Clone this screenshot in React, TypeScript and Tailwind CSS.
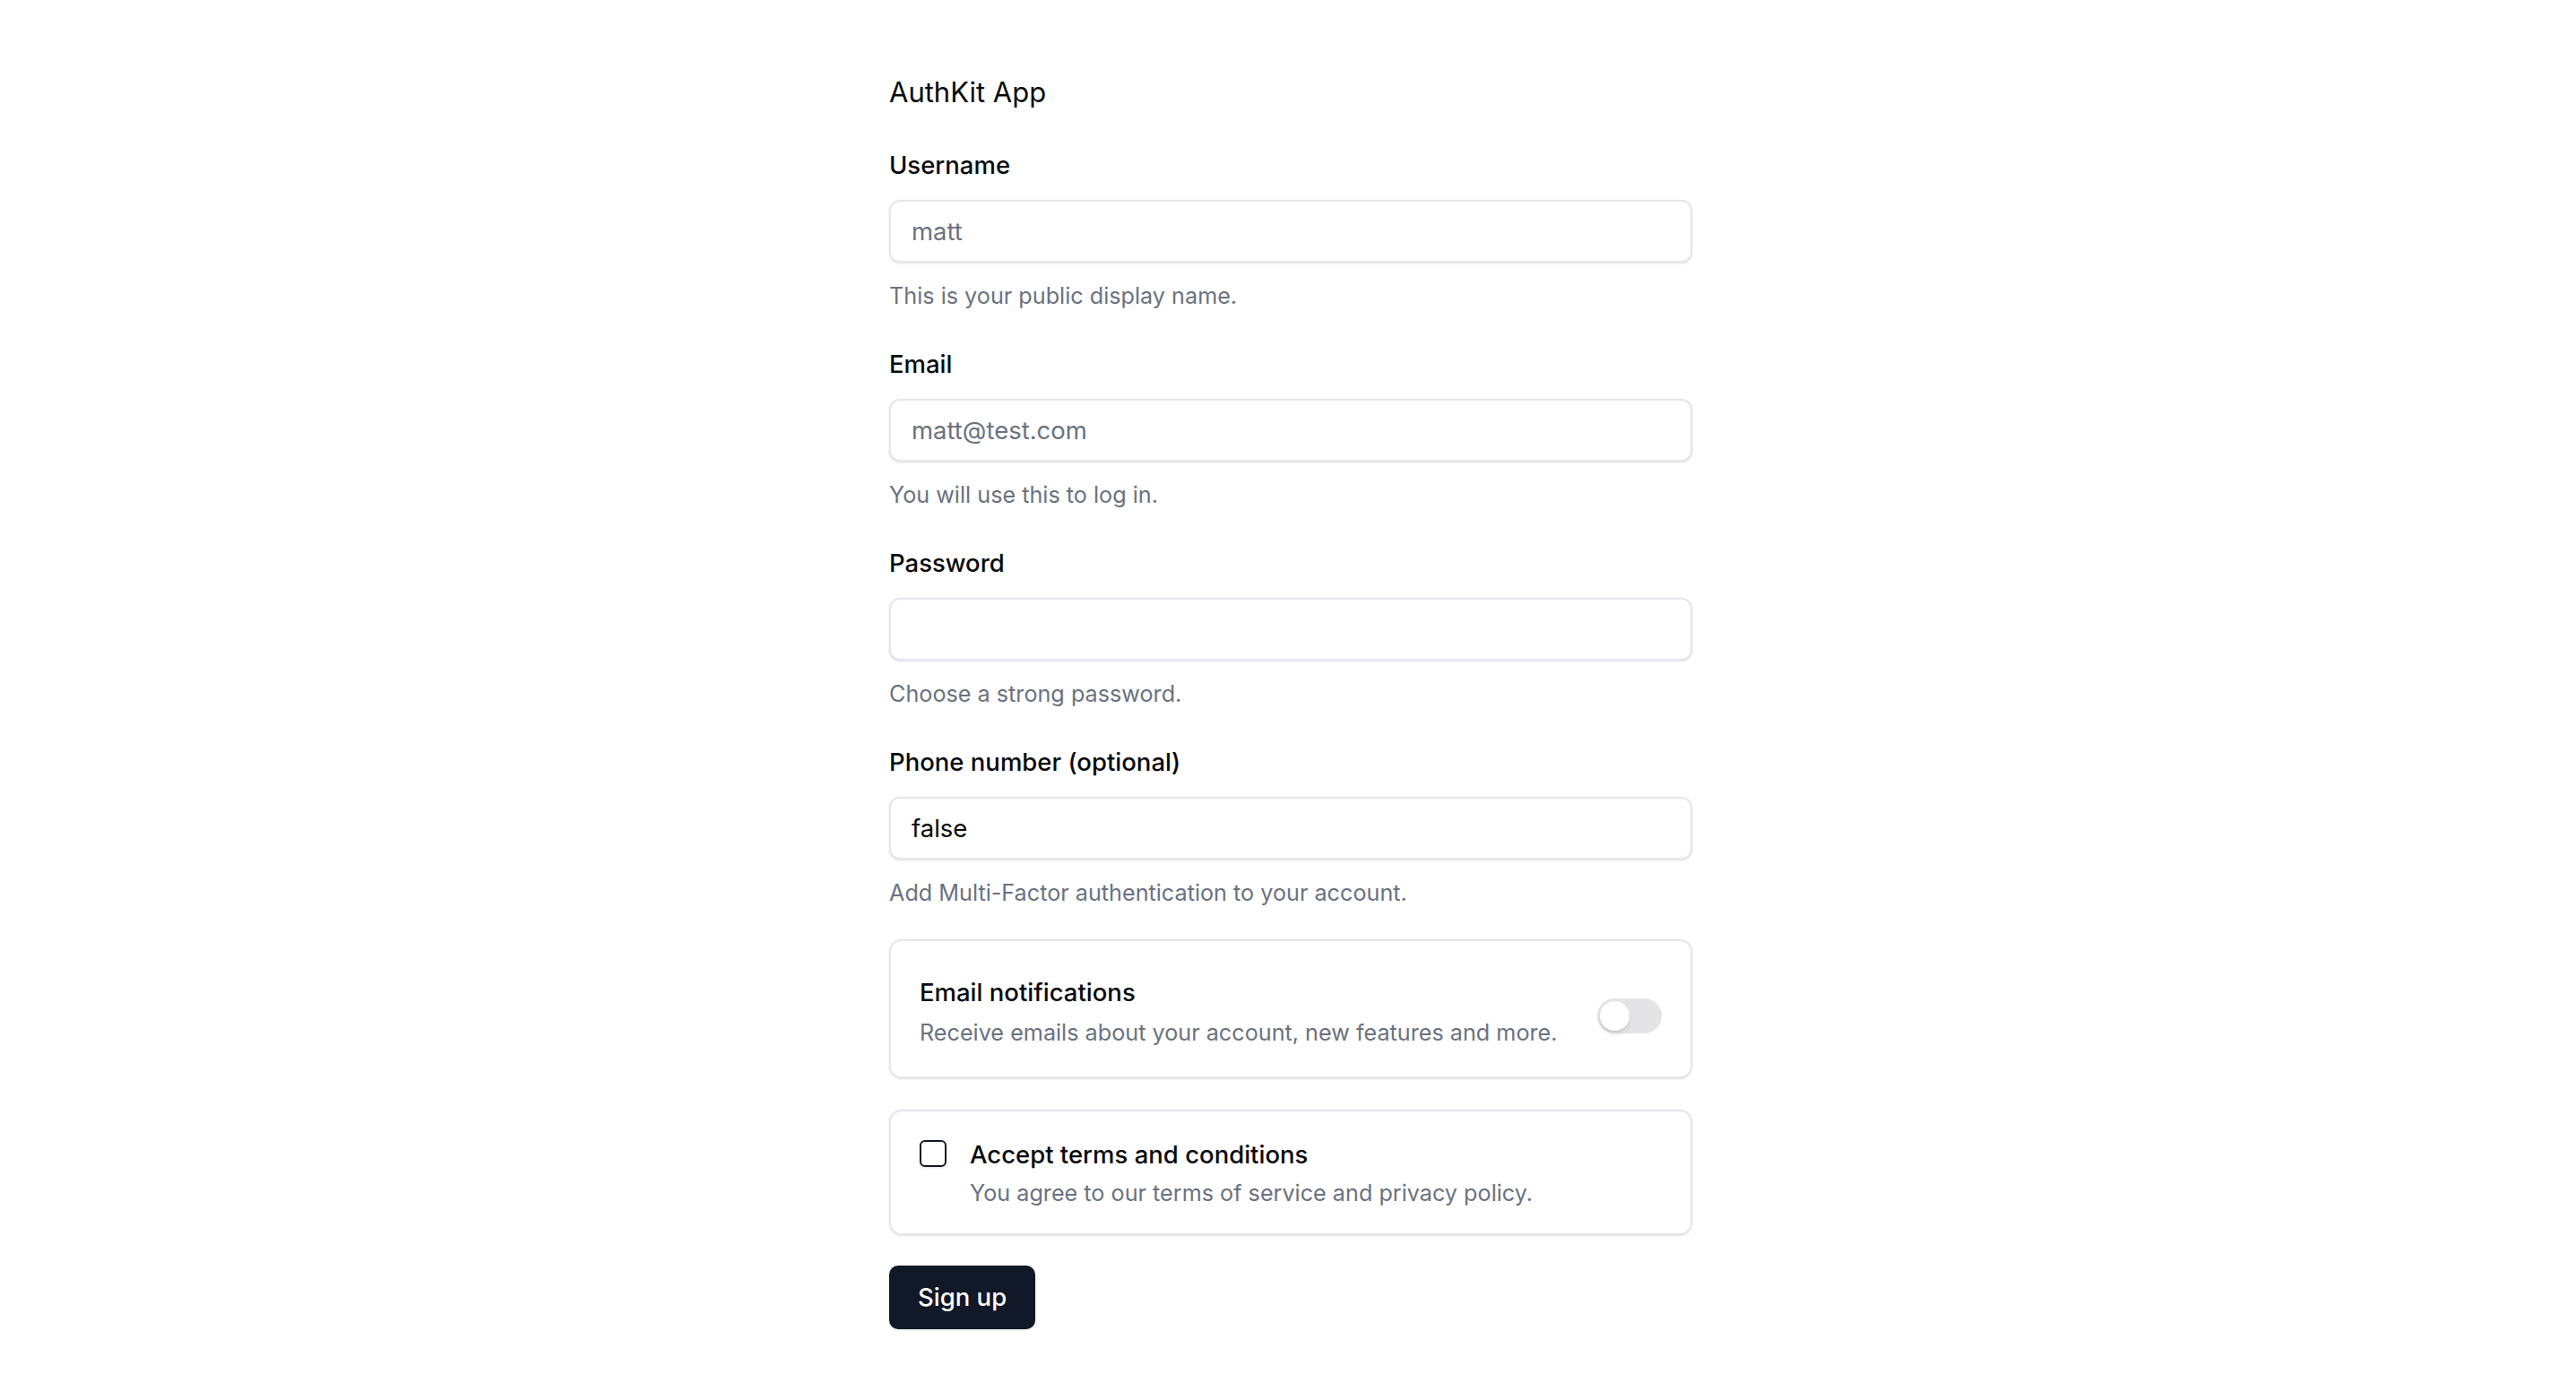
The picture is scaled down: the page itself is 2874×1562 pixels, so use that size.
import { useState } from "react";

type FieldProps = {
  label: string;
  description: string;
  type?: string;
  placeholder?: string;
  defaultValue?: string;
  first?: boolean;
};

function Field({ label, description, type = "text", placeholder, defaultValue, first }: FieldProps) {
  return (
    <div className={first ? "flex flex-col" : "mt-[40px] flex flex-col"}>
      <label className="h-[36px] text-[27.5px] leading-[36px] font-medium text-[#09090b]">{label}</label>
      <input
        type={type}
        placeholder={placeholder}
        defaultValue={defaultValue}
        className="mt-[21px] h-[70px] w-full rounded-[12px] border-2 border-[#e5e7eb] bg-white px-[23px] text-[27.5px] text-[#09090b] shadow-sm outline-none placeholder:text-[#6b7280]"
      />
      <p className="mt-[19px] h-[36px] text-[25.2px] leading-[36px] text-[#6b7280]">{description}</p>
    </div>
  );
}

export default function App() {
  const [notify, setNotify] = useState(false);
  const [terms, setTerms] = useState(false);

  return (
    <div
      className="min-h-screen bg-white flex justify-center pl-[6px]"
      style={{ fontFamily: "Inter, 'Noto Sans', sans-serif" }}
    >
      <div className="w-[896px] pt-[81px]">
        <h1 className="h-[44px] text-[31px] leading-[44px] font-normal text-[#09090b]">AuthKit App</h1>

        <form className="mt-[41px] flex flex-col" onSubmit={(e) => e.preventDefault()}>
          <Field first label="Username" placeholder="matt" description="This is your public display name." />
          <Field label="Email" placeholder="matt@test.com" description="You will use this to log in." />
          <Field label="Password" type="password" description="Choose a strong password." />
          <Field
            label="Phone number (optional)"
            defaultValue="false"
            description="Add Multi-Factor authentication to your account."
          />

          {/* notifications card */}
          <div className="mt-[34px] flex items-center justify-between rounded-[14px] border-2 border-[#e5e7eb] px-[32px] pt-[39px] pb-[31px] shadow-sm">
            <div className="flex flex-col">
              <span className="h-[36px] text-[27.5px] leading-[36px] font-medium text-[#09090b]">Email notifications</span>
              <span className="mt-[9px] h-[36px] text-[25.2px] leading-[36px] text-[#6b7280]">
                Receive emails about your account, new features and more.
              </span>
            </div>
            <button
              type="button"
              onClick={() => setNotify((v) => !v)}
              className={`mt-[7px] flex h-[39px] w-[72px] items-center rounded-full px-[3px] ${notify ? "bg-[#111827] justify-end" : "bg-[#e4e4e7] justify-start"}`}
            >
              <span className="block h-[33px] w-[33px] rounded-full bg-white shadow-md" />
            </button>
          </div>

          {/* terms card */}
          <div className="mt-[35px] flex items-start gap-[26px] rounded-[14px] border-2 border-[#e5e7eb] px-[32px] pt-[30px] pb-[27px] shadow-sm">
            <button
              type="button"
              onClick={() => setTerms((v) => !v)}
              className="mt-[2px] flex h-[30px] w-[30px] shrink-0 items-center justify-center rounded-[6px] border-2 border-[#111827] bg-white shadow-sm"
            >
              {terms && (
                <svg className="h-[20px] w-[20px] text-[#111827]" fill="none" viewBox="0 0 24 24" stroke="currentColor">
                  <path strokeLinecap="round" strokeLinejoin="round" strokeWidth={3} d="M5 13l4 4L19 7" />
                </svg>
              )}
            </button>
            <div className="flex flex-col">
              <span className="h-[36px] text-[27.5px] leading-[36px] font-medium text-[#09090b]">
                Accept terms and conditions
              </span>
              <span className="mt-[7px] h-[36px] text-[25.2px] leading-[36px] text-[#6b7280]">
                You agree to our terms of service and privacy policy.
              </span>
            </div>
          </div>

          <div className="mt-[34px]">
            <button
              type="submit"
              className="h-[71px] rounded-[10px] bg-[#111827] px-[32px] text-[27.5px] font-medium text-white shadow-sm"
            >
              Sign up
            </button>
          </div>
        </form>
      </div>
    </div>
  );
}
